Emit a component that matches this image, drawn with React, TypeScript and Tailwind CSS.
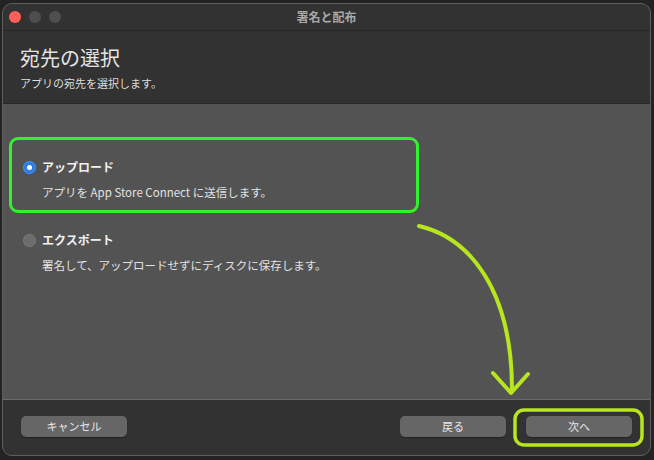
import React from 'react';

const font = { fontFamily: '"Noto Sans CJK JP", "Noto Sans", sans-serif' };

const Radio = ({ checked }: { checked: boolean }) =>
  checked ? (
    <span className="flex h-[13px] w-[13px] items-center justify-center rounded-full bg-[#2f7de1] shadow-[inset_0_0_0_1px_#3d8df0]">
      <span className="h-[5px] w-[5px] rounded-full bg-white" />
    </span>
  ) : (
    <span className="h-[13px] w-[13px] rounded-full bg-[#6c6c6c] shadow-[inset_0_0_0_1px_#777]" />
  );

const Button = ({ label }: { label: string }) => (
  <button className="h-[21px] w-[106px] rounded-[5px] bg-[#666666] text-[11px] text-[#e8e8e8] shadow-[0_1px_1px_rgba(0,0,0,0.35)]">
    {label}
  </button>
);

export default function App() {
  return (
    <div className="relative h-[460px] w-[654px] overflow-hidden bg-[#232323]" style={font}>
      <div className="ml-[2px] mt-[3px] flex h-[453px] w-[649px] flex-col overflow-hidden rounded-[10px] border border-[#5e5e5e] bg-[#323232]">
        {/* title bar */}
        <div className="relative flex h-[27px] shrink-0 items-center border-b border-[#262626] px-[6px]">
          <div className="flex gap-[8px]">
            <span className="h-[12px] w-[12px] rounded-full bg-[#fe5f57]" />
            <span className="h-[12px] w-[12px] rounded-full bg-[#4e4e4e]" />
            <span className="h-[12px] w-[12px] rounded-full bg-[#4e4e4e]" />
          </div>
          <div className="absolute inset-0 flex items-center justify-center pb-[1px] text-[12px] font-bold text-[#a9a9a9]">
            署名と配布
          </div>
        </div>

        {/* header */}
        <div className="flex h-[73px] shrink-0 flex-col border-b border-[#272727] pl-[17px] pt-[14px]">
          <div className="text-[20px] leading-[26px] text-[#e4e4e4]">宛先の選択</div>
          <div className="mt-[5px] text-[11px] leading-[14px] text-[#dedede]">アプリの宛先を選択します。</div>
        </div>

        {/* content */}
        <div className="flex flex-1 flex-col bg-[#535353] pl-[6px] pt-[33px]">
          <div className="flex h-[76px] w-[410px] flex-col rounded-[9px] border-[3px] border-[#2ef52b] pl-[11px] pt-[19px]">
            <div className="flex items-center gap-[6px]">
              <Radio checked />
              <span className="text-[12px] font-bold leading-[16px] text-[#f0f0f0]">アップロード</span>
            </div>
            <div className="ml-[19px] mt-[10px] text-[11.5px] leading-[14px] text-[#e2e2e2]">
              アプリを App Store Connect に送信します。
            </div>
          </div>
          <div className="ml-[14px] mt-[19px] flex flex-col">
            <div className="flex items-center gap-[6px]">
              <Radio checked={false} />
              <span className="text-[12px] font-bold leading-[16px] text-[#f0f0f0]">エクスポート</span>
            </div>
            <div className="ml-[19px] mt-[10px] text-[11.5px] leading-[14px] text-[#e2e2e2]">
              署名して、アップロードせずにディスクに保存します。
            </div>
          </div>
        </div>

        {/* footer */}
        <div className="flex h-[56px] shrink-0 items-center border-t border-[#6a6a6a] px-[18px] pb-[2px]">
          <Button label="キャンセル" />
          <div className="ml-auto flex gap-[20px]">
            <Button label="戻る" />
            <Button label="次へ" />
          </div>
        </div>
      </div>

      {/* annotation */}
      <svg className="pointer-events-none absolute inset-0" width="654" height="460" viewBox="0 0 654 460">
        <path
          d="M419 226 C 470 238, 512 290, 512 390"
          fill="none"
          stroke="#b8e61e"
          strokeWidth="4"
          strokeLinecap="round"
        />
        <path
          d="M493 373 L511 393 L528 374"
          fill="none"
          stroke="#b8e61e"
          strokeWidth="4"
          strokeLinecap="round"
          strokeLinejoin="round"
        />
        <rect x="515" y="410" width="127" height="35" rx="9" fill="none" stroke="#b8e61e" strokeWidth="3.5" />
      </svg>
    </div>
  );
}
